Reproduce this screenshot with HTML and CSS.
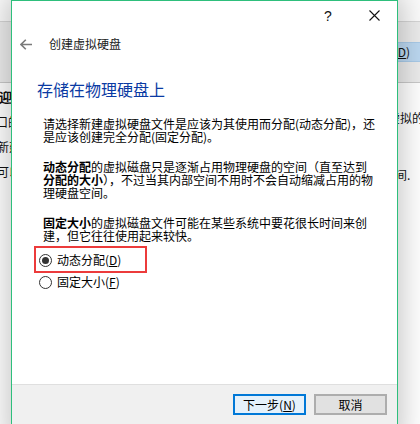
FILE: index.html
```html
<!DOCTYPE html>
<html lang="zh-CN">
<head>
<meta charset="utf-8">
<title>创建虚拟硬盘</title>
<link rel="stylesheet" href="styles.css">
</head>
<body>
<div class="desk">
  <div class="bg-top"></div>
  <div class="bg-bar">
    <div class="bg-row"></div>
    <div class="bg-row"><span class="bg-sel">动态分配(<u>D</u>)</span></div>
    <div class="bg-row"></div>
  </div>
  <div class="bg-content">
    <div class="bg-left">
      <div class="bg-line bg-w12 bg-bold">欢迎</div>
      <div class="bg-line bg-w20">窗口的</div>
      <div class="bg-line bg-w21">新建</div>
      <div class="bg-line bg-w21">可以</div>
    </div>
    <div class="bg-right">
      <div class="bg-rline bg-r1">虚拟的</div>
      <div class="bg-rline bg-r2">空间.</div>
    </div>
  </div>
</div>

<div class="dialog">
  <div class="titlebar">
    <div class="tb-btn tb-help">?</div>
    <div class="tb-btn tb-close">
      <svg width="11" height="11" viewBox="0 0 11 11"><path d="M0.5 0.5 L10.5 10.5 M10.5 0.5 L0.5 10.5" stroke="#111" stroke-width="1.1" fill="none"/></svg>
    </div>
  </div>
  <div class="header">
    <svg class="back" width="12" height="11" viewBox="0 0 12 11"><path d="M1 5.5 H12 M5.8 0.7 L1 5.5 L5.8 10.3" stroke="#7a7a7a" stroke-width="1.6" fill="none"/></svg>
    <span class="header-title">创建虚拟硬盘</span>
  </div>
  <div class="main">
    <h1 class="heading">存储在物理硬盘上</h1>
    <div class="text">
      <p class="para">请选择新建虚拟硬盘文件是应该为其使用而分配(动态分配)，还是应该创建完全分配(固定分配)。</p>
      <p class="para"><b>动态分配</b>的虚拟磁盘只是逐渐占用物理硬盘的空间（直至达到<b>分配的大小</b>），不过当其内部空间不用时不会自动缩减占用的物理硬盘空间。</p>
      <p class="para"><b>固定大小</b>的虚拟磁盘文件可能在某些系统中要花很长时间来创建，但它往往使用起来较快。</p>
    </div>
    <div class="radios">
      <div class="radio-row marked">
        <span class="radio checked"></span><span class="radio-label">动态分配(<u>D</u>)</span>
        <span class="mark"></span>
      </div>
      <div class="radio-row">
        <span class="radio"></span><span class="radio-label">固定大小(<u>F</u>)</span>
      </div>
    </div>
  </div>
  <div class="footer">
    <button class="btn btn-default">下一步(<u>N</u>)</button>
    <button class="btn">取消</button>
  </div>
</div>
</body>
</html>
```

FILE: styles.css
```css
html, body {
  margin: 0;
  padding: 0;
  width: 420px;
  height: 424px;
  overflow: hidden;
  background: #ffffff;
  font-family: "Noto Sans CJK SC", "Noto Sans", sans-serif;
}

/* background window */
.desk {
  width: 420px;
  height: 424px;
  display: flex;
  flex-direction: column;
  background: #ffffff;
  font-size: 12px;
  color: #111;
}
.bg-top {
  height: 21px;
  background: #fbfbfb;
}
.bg-bar {
  display: flex;
  flex-direction: column;
  border-top: 1px solid #d5d5d5;
  border-bottom: 1px solid #c9c9c9;
  background: #ececec;
}
.bg-row {
  height: 20px;
  display: flex;
  justify-content: flex-end;
}
.bg-sel {
  display: flex;
  align-items: center;
  justify-content: flex-end;
  width: 120px;
  padding-right: 10px;
  background: #bcd8f1;
  border-top: 1px solid #a9cbe9;
  border-bottom: 1px solid #a9cbe9;
  line-height: 18px;
}
.bg-content {
  flex: 1;
  display: flex;
  justify-content: space-between;
}
.bg-left {
  display: flex;
  flex-direction: column;
  padding-top: 1px;
}
.bg-line {
  height: 25px;
  line-height: 25px;
  display: flex;
  justify-content: flex-end;
  white-space: nowrap;
}
.bg-bold { font-weight: bold; font-size: 13px; }
.bg-w12 { width: 12px; }
.bg-w20 { width: 20px; }
.bg-w21 { width: 21px; }
.bg-right {
  display: flex;
  flex-direction: column;
  width: 32px;
}
.bg-rline {
  white-space: nowrap;
  line-height: 16px;
}
.bg-r1 { margin-top: 27px; margin-left: 0; }
.bg-r2 { margin-top: 41px; margin-left: -5px; }

/* dialog */
.dialog {
  position: absolute;
  left: 11px;
  top: 0;
  width: 387px;
  height: 440px;
  box-sizing: border-box;
  border: 1px solid #2ebf7c;
  background: #ffffff;
  box-shadow: 0 0 26px 5px rgba(0, 0, 0, 0.22);
  display: flex;
  flex-direction: column;
  font-size: 12px;
  color: #000;
}
.titlebar {
  height: 29px;
  display: flex;
  justify-content: flex-end;
}
.tb-btn {
  width: 46px;
  height: 29px;
  display: flex;
  align-items: center;
  justify-content: center;
}
.tb-help {
  font-family: "Liberation Sans", sans-serif;
  font-size: 14px;
  color: #111;
}
.header {
  height: 28px;
  display: flex;
  align-items: center;
  padding-left: 8px;
}
.back { display: block; }
.header-title {
  margin-left: 17px;
  color: #1a1a1a;
  line-height: 14px;
}
.main {
  flex: 1;
  display: flex;
  flex-direction: column;
}
.heading {
  margin: 21px 0 0 25px;
  font-size: 16px;
  font-weight: normal;
  line-height: 20px;
  color: #0a3aa3;
}
.text {
  width: 334px;
  margin: 18px 0 0 31px;
  display: flex;
  flex-direction: column;
  gap: 17px;
}
.para {
  margin: 0;
  line-height: 13px;
}
.para b { font-weight: bold; }
.radios {
  display: flex;
  flex-direction: column;
  margin: 7px 0 0 27px;
}
.radio-row {
  position: relative;
  height: 22px;
  display: flex;
  align-items: center;
}
.radio {
  width: 13px;
  height: 13px;
  box-sizing: border-box;
  border: 1px solid #333;
  border-radius: 50%;
  display: flex;
  align-items: center;
  justify-content: center;
  background: #fff;
}
.radio.checked::after {
  content: "";
  width: 7px;
  height: 7px;
  border-radius: 50%;
  background: #333;
}
.radio-label {
  margin-left: 5px;
  line-height: 14px;
}
.mark {
  position: absolute;
  left: -5px;
  top: -3px;
  width: 113px;
  height: 27px;
  box-sizing: border-box;
  border: 2px solid #ec3b3b;
}
.footer {
  height: 55px;
  box-sizing: border-box;
  border-top: 1px solid #dfdfdf;
  background: #f0f0f0;
  display: flex;
  justify-content: flex-end;
  align-items: flex-start;
  gap: 8px;
  padding: 9px 10px 0 0;
}
.btn {
  width: 73px;
  height: 21px;
  box-sizing: border-box;
  border: 2px solid #adadad;
  background: #e1e1e1;
  font-family: "Noto Sans CJK SC", sans-serif;
  font-size: 12px;
  line-height: 15px;
  color: #000;
  padding: 0;
  margin: 0;
}
.btn-default {
  border-color: #0078d7;
  background: #e5f1fb;
}
```
